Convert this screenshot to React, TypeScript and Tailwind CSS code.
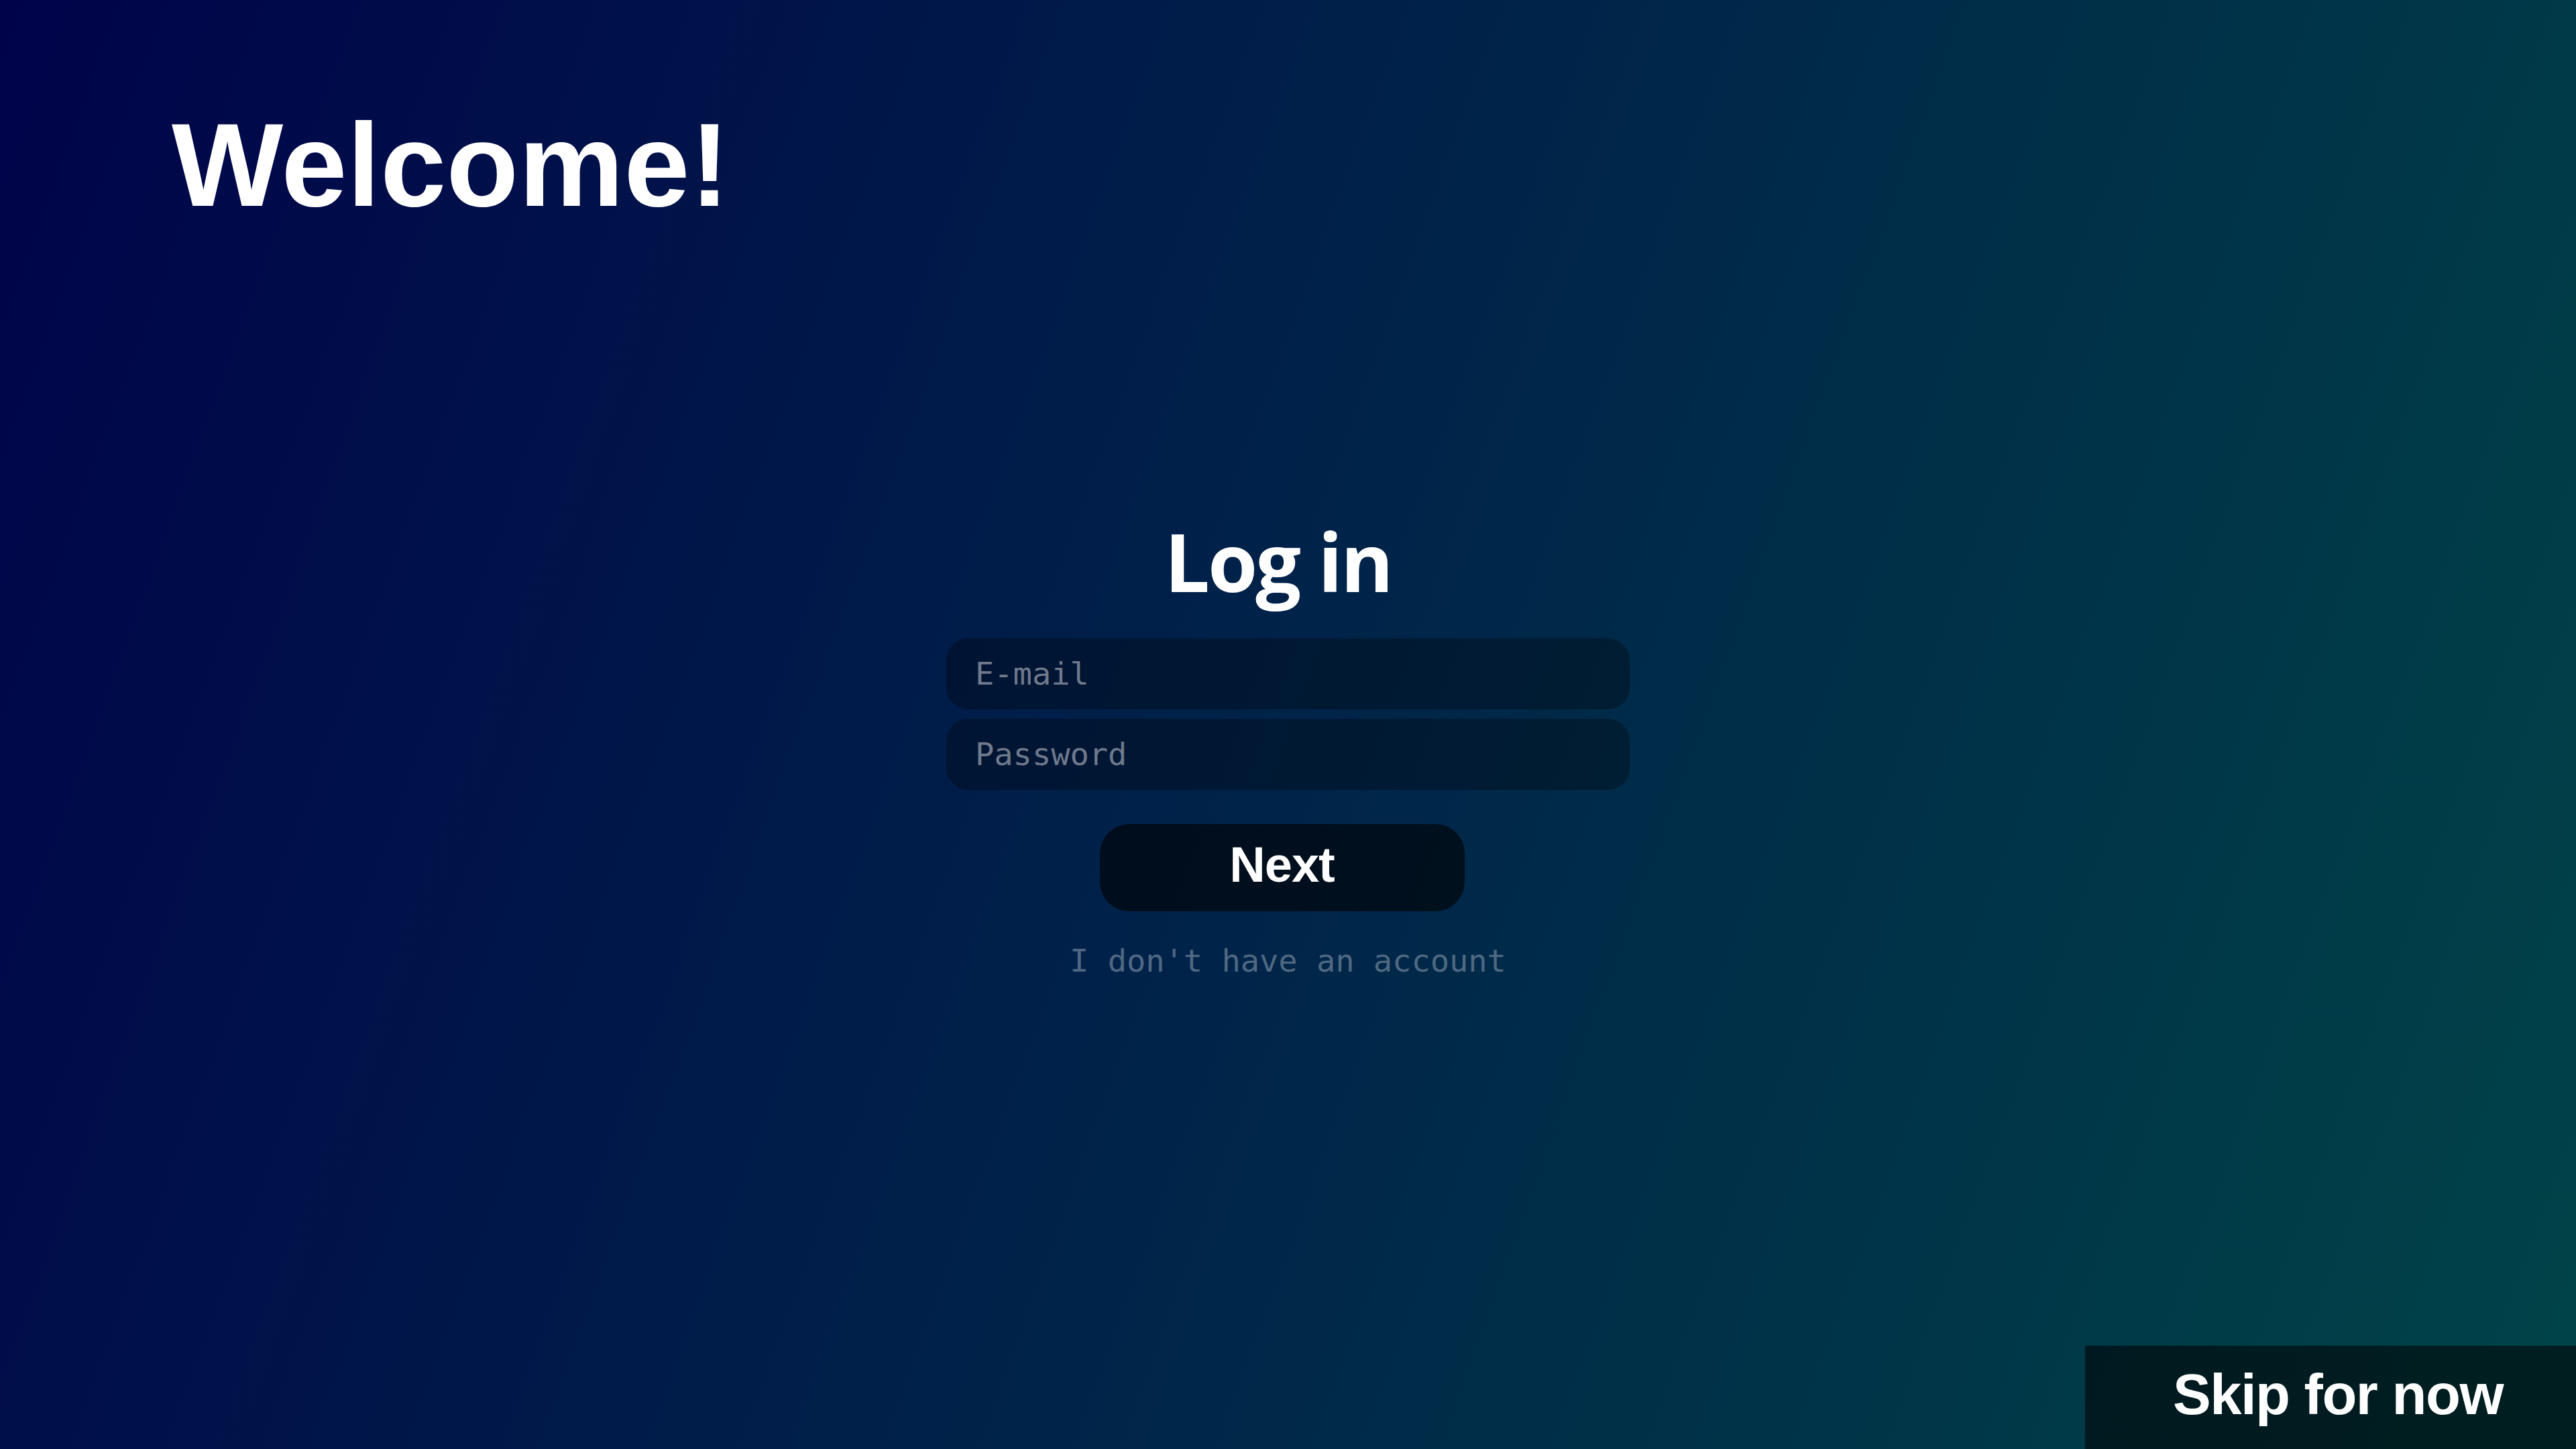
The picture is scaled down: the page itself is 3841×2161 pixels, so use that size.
import React, { useState } from 'react';

const monoFont = "font-['DejaVu_Sans_Mono','Liberation_Mono',monospace]";

const App: React.FC = () => {
  const [email, setEmail] = useState('');
  const [password, setPassword] = useState('');

  const inputClass = `h-[106px] w-[1019px] rounded-[33px] bg-black/30 px-[43px] pb-[2px] text-[47px] text-white outline-none placeholder:text-[#6e7a8c] ${monoFont}`;

  return (
    <div className="flex h-screen w-full flex-col bg-[linear-gradient(110deg,#00034a_0%,#004448_100%)] font-['Liberation_Sans',Arial,sans-serif] text-white antialiased">
      {/* Header */}
      <h1 className="pl-[256px] pt-[158px] text-[176px] font-bold leading-none tracking-[0.5px]">Welcome!</h1>

      {/* Login form */}
      <div className="mt-[443px] flex flex-col items-center">
        <h2 className="mr-[30px] font-['Open_Sans','Noto_Sans',sans-serif] text-[120px] font-bold leading-none tracking-[-3px]">
          Log in
        </h2>

        <div className="mt-[55px] flex flex-col gap-[14px]">
          <input
            type="email"
            placeholder="E-mail"
            value={email}
            onChange={(e) => setEmail(e.target.value)}
            className={inputClass}
          />
          <input
            type="password"
            placeholder="Password"
            value={password}
            onChange={(e) => setPassword(e.target.value)}
            className={inputClass}
          />
        </div>

        <button
          type="button"
          className="mr-[18px] mt-[51px] flex h-[130px] w-[544px] items-center justify-center rounded-[44px] bg-black/60 pb-[8px] text-[74px] font-bold leading-none tracking-[-1px]"
        >
          Next
        </button>

        <button
          type="button"
          className={`mt-[50px] text-[47px] leading-none text-[#4f6882] ${monoFont}`}
        >
          I don't have an account
        </button>
      </div>

      {/* Skip */}
      <button
        type="button"
        className="mt-auto flex h-[154px] w-[732px] items-center self-end bg-black/55 pb-[10px] pl-[131px] text-[85px] font-bold leading-none tracking-[-1.5px]"
      >
        Skip for now
      </button>
    </div>
  );
};

export default App;
